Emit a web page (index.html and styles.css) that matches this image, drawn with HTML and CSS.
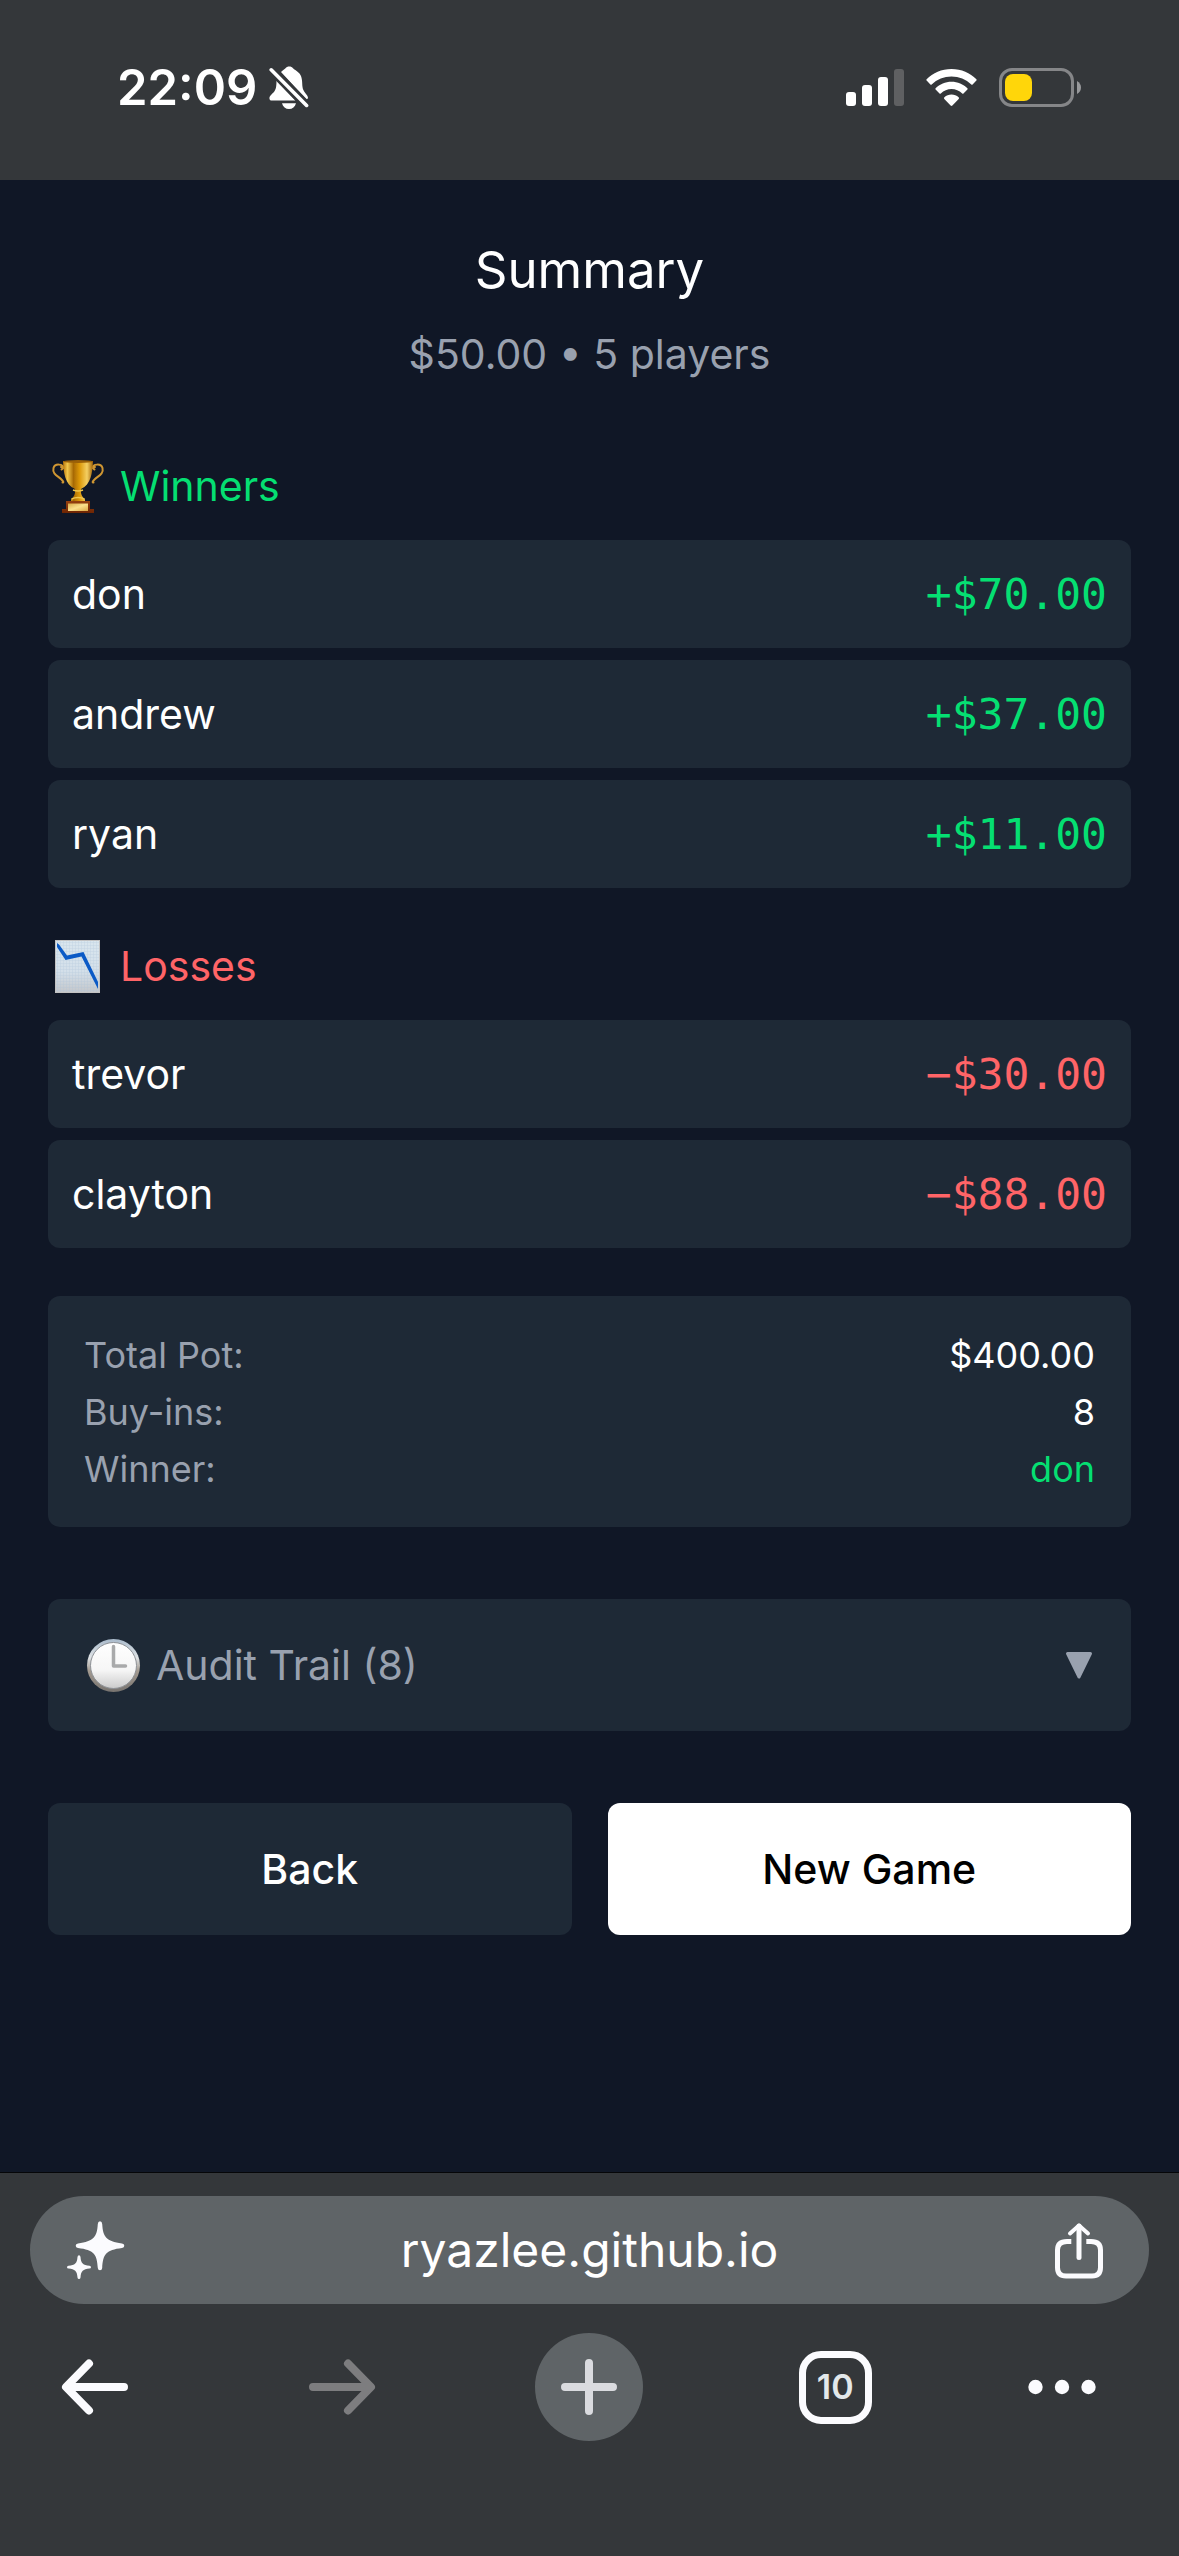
FILE: index.html
```html
<!DOCTYPE html>
<html lang="en">
<head>
<meta charset="utf-8">
<meta name="viewport" content="width=device-width, initial-scale=1">
<title>Summary</title>
<link rel="stylesheet" href="styles.css">
</head>
<body>
<div class="screen">
  <header class="status-bar">
    <div class="status-group status-left">
      <time class="clock">22:09</time>
      <svg class="icon-bell" viewBox="0 0 40 44" fill="#fff" role="img" aria-label="Silent mode">
        <path d="M12 6C14 4 15.500 3.400 16.500 2.200C18 0 22.500 0 24 2.200C25 3.500 28 4.500 30.500 7.500C33.500 11.500 33 16 33.500 21C34 26 38.500 28.500 39 31.500Q39 33 37.500 33.500Z"/>
        <path d="M7.500 14.500L26.500 34.500H3C-.500 34.500 0 30.500 2 29C6 25 7.500 24 7.500 14.500Z"/>
        <path d="M13 37.200H27C26 41 23.500 43 20 43S14 41 13 37.200Z"/>
        <path d="M2.200 3.400L38 40" fill="none" stroke="#34373a" stroke-width="9"/>
        <path d="M2.200 3.800L37.600 39.400" fill="none" stroke="#fff" stroke-width="3.600" stroke-linecap="round"/>
      </svg>
    </div>
    <div class="status-group status-right">
      <svg class="icon-signal" viewBox="0 0 58 38" fill="#fff" role="img" aria-label="Signal">
        <rect x="0" y="23" width="10" height="14" rx="3"/>
        <rect x="16" y="16" width="10" height="21" rx="3"/>
        <rect x="32" y="8" width="10" height="29" rx="3"/>
        <rect x="48" y="0" width="10" height="37" rx="3" fill="#5f6062"/>
      </svg>
      <svg class="icon-wifi" viewBox="0 0 51 38" fill="#fff" role="img" aria-label="Wi-Fi">
        <path d="M.6 10.300C7 3.700 15.500 0 25.500 0S44 3.700 50.400 10.300Q51 11 50.400 11.600L46.600 15.400Q46 16 45.300 15.400C40 10.300 33 7.400 25.500 7.400S11 10.300 5.700 15.400Q5 16 4.400 15.400L.6 11.600Q0 11 .6 10.300Z"/>
        <path d="M9.600 19.200C13.800 15.100 19.300 12.700 25.500 12.700S37.200 15.100 41.400 19.200Q42 20 41.400 20.600L37.500 24.500Q36.800 25 36.200 24.500C33.300 21.700 29.500 20.100 25.500 20.100S17.700 21.700 14.800 24.500Q14.200 25 13.500 24.500L9.600 20.600Q9 20 9.600 19.200Z"/>
        <path d="M18.400 28.200C20.300 26.500 22.800 25.500 25.500 25.500S30.700 26.500 32.600 28.200Q33.500 29 32.700 29.900L26.400 36.500Q25.500 37.300 24.600 36.500L18.300 29.900Q17.500 29 18.400 28.200Z"/>
      </svg>
      <svg class="icon-battery" viewBox="0 0 82 40" role="img" aria-label="Battery">
        <rect x="1.500" y="1.500" width="72" height="36" rx="11.500" fill="none" stroke="#858688" stroke-width="3"/>
        <rect x="6" y="6" width="27" height="27" rx="8" fill="#ffd60a"/>
        <path d="M78 13Q82 15.500 82 19.500T78 26Z" fill="#98999b"/>
      </svg>
    </div>
  </header>

  <main class="page">
    <div class="intro">
      <h1 class="title">Summary</h1>
      <p class="subtitle">$50.00 • 5 players</p>
    </div>

    <section class="group">
      <h2 class="group-title gain">
        <svg class="emoji" viewBox="0 0 60 60" aria-hidden="true">
          <defs>
            <linearGradient id="gold" x1="0" x2="1" y1="0" y2="0">
              <stop offset="0" stop-color="#b87408"/><stop offset=".15" stop-color="#f2c64a"/>
              <stop offset=".35" stop-color="#a86a04"/><stop offset=".55" stop-color="#dc9808"/>
              <stop offset=".8" stop-color="#f4cf62"/><stop offset="1" stop-color="#a06206"/>
            </linearGradient>
            <linearGradient id="wood" x1="0" x2="0" y1="0" y2="1">
              <stop offset="0" stop-color="#95400f"/><stop offset="1" stop-color="#6e2503"/>
            </linearGradient>
            <linearGradient id="plate" x1="0" x2="1" y1="0" y2="1">
              <stop offset="0" stop-color="#d8ab4a"/><stop offset=".5" stop-color="#fbe08c"/><stop offset="1" stop-color="#dba846"/>
            </linearGradient>
          </defs>
          <g fill="none" stroke="#cf9632" stroke-width="2" stroke-linecap="round">
            <path d="M16 12C15 8 7 7 5.500 12C4 18 10 20 13 23C15.500 25.500 16 26.500 14.500 26.500M13 11C15 11 15 13 13.500 13.500"/>
            <path d="M44 12C45 8 53 7 54.500 12C56 18 50 20 47 23C44.500 25.500 44 26.500 45.500 26.500M47 11C45 11 45 13 46.500 13.500"/>
          </g>
          <path d="M15 5H45C44.500 16 43 29 33 33C32.500 36 33 40 37 43.500V46H23V43.500C27 40 27.500 36 27 33C17 29 15.500 16 15 5Z" fill="url(#gold)"/>
          <ellipse cx="30" cy="5.500" rx="15" ry="1.500" fill="#9a6008"/>
          <path d="M25 34Q30 36 35 34M23.500 43Q30 40 36.500 43" fill="none" stroke="#f0c64e" stroke-width="1.500"/>
          <path d="M18 45H42V53H46V57H14V53H18Z" fill="url(#wood)"/>
          <rect x="20" y="47.500" width="20" height="7.500" fill="url(#plate)"/>
        </svg>
        Winners
      </h2>
      <ul class="rows">
        <li class="row"><span>don</span><span class="amount gain">+$70.00</span></li>
        <li class="row"><span>andrew</span><span class="amount gain">+$37.00</span></li>
        <li class="row"><span>ryan</span><span class="amount gain">+$11.00</span></li>
      </ul>
    </section>

    <section class="group">
      <h2 class="group-title loss">
        <svg class="emoji" viewBox="0 0 60 60" aria-hidden="true">
          <defs>
            <linearGradient id="paper" x1="0" x2="0" y1="0" y2="1">
              <stop offset="0" stop-color="#d9e6ee"/><stop offset=".6" stop-color="#d3dfe9"/><stop offset="1" stop-color="#c3c6ca"/>
            </linearGradient>
            <pattern id="grid" width="3" height="3" patternUnits="userSpaceOnUse">
              <path d="M0 0H3M0 0V3" stroke="#a9c2d8" stroke-width=".8"/>
            </pattern>
          </defs>
          <rect x="7" y="4" width="45" height="53" fill="url(#paper)"/>
          <rect x="7" y="4" width="45" height="53" fill="url(#grid)" opacity=".55"/>
          <rect x="7.500" y="4.500" width="44" height="52" fill="none" stroke="#c2c2c2"/>
          <path d="M9 7V11L17.500 24L33.500 20.500L50 53V46L35.500 16L19 19.500L11 8.500Z" fill="#0b5ac6"/>
        </svg>
        Losses
      </h2>
      <ul class="rows">
        <li class="row"><span>trevor</span><span class="amount loss">−$30.00</span></li>
        <li class="row"><span>clayton</span><span class="amount loss">−$88.00</span></li>
      </ul>
    </section>

    <dl class="totals">
      <div class="total"><dt>Total Pot:</dt><dd>$400.00</dd></div>
      <div class="total"><dt>Buy-ins:</dt><dd>8</dd></div>
      <div class="total"><dt>Winner:</dt><dd class="gain">don</dd></div>
    </dl>

    <button class="audit" type="button" aria-expanded="false">
      <span class="audit-label">
        <svg class="emoji" viewBox="0 0 60 60" aria-hidden="true">
          <defs>
            <linearGradient id="rim" x1="0" x2="0" y1="0" y2="1">
              <stop offset="0" stop-color="#a9bacb"/><stop offset=".35" stop-color="#dfe3e6"/>
              <stop offset=".6" stop-color="#a39a90"/><stop offset="1" stop-color="#77736f"/>
            </linearGradient>
            <linearGradient id="face" x1="0" x2="0" y1="0" y2="1">
              <stop offset="0" stop-color="#fff"/><stop offset=".6" stop-color="#f6f6f6"/><stop offset="1" stop-color="#cbcbcb"/>
            </linearGradient>
          </defs>
          <circle cx="29.500" cy="30.500" r="26.500" fill="url(#rim)"/>
          <circle cx="29.500" cy="30.500" r="23" fill="url(#face)" stroke="#8d9196" stroke-width="1"/>
          <path d="M29.500 11.500V31H41.500" fill="none" stroke="#a9aaab" stroke-width="3.500" stroke-linecap="round" stroke-linejoin="round"/>
        </svg>
        Audit Trail (8)
      </span>
      <svg class="caret" viewBox="0 0 32 32" aria-hidden="true">
        <path d="M4.500 4.500H27.500L16 28Z" fill="#99a1af" stroke="#99a1af" stroke-width="3" stroke-linejoin="round"/>
      </svg>
    </button>

    <div class="actions">
      <button class="action action-dark" type="button">Back</button>
      <button class="action action-light" type="button">New Game</button>
    </div>
  </main>

  <footer class="browser-bar">
    <div class="omnibox">
      <button class="icon-button" type="button" aria-label="Assistant">
        <svg class="icon-60" viewBox="0 0 60 60" fill="#fbfbfe">
          <path d="M34 1.300Q36 1.300 36.200 4C37 17 40 21 56 23.500Q58.300 24 58.300 25.800T56 28C40 30 37 34 36.200 48Q36 50.200 34 50.200T31.800 48C31 34 28 30 12 28Q9.700 27.600 9.700 25.800T12 23.500C28 21 31 17 31.800 4Q32 1.300 34 1.300Z"/>
          <path d="M13 35.200Q14.300 35.200 14.500 37C15 43.500 17 45.200 23.500 45.800Q25 46 25 47.200T23.500 48.600C17 49.300 15 51 14.500 57.500Q14.300 59 13 59T11.500 57.500C11 51 9 49.300 2.500 48.600Q1 48.400 1 47.200T2.500 45.800C9 45.200 11 43.500 11.500 37Q11.700 35.200 13 35.200Z"/>
        </svg>
      </button>
      <input class="address" type="text" aria-label="Address" value="ryazlee.github.io">
      <button class="icon-button" type="button" aria-label="Share">
        <svg class="icon-60" viewBox="0 0 60 60" fill="none" stroke="#fbfbfe" stroke-width="5">
          <path d="M18.300 21.500H14Q4.500 21.500 4.500 30V47.500Q4.500 56 13 56H39Q47.500 56 47.500 47.500V30Q47.500 21.500 38 21.500H33.300"/>
          <path d="M26 37.500V6" stroke-linecap="round"/>
          <path d="M17 13.500L26 5.500L35 13.500" stroke-width="4" stroke-linecap="round" stroke-linejoin="round"/>
        </svg>
      </button>
    </div>
    <nav class="toolbar" aria-label="Browser">
      <button class="icon-button tool" type="button" aria-label="Back">
        <svg class="icon-68" viewBox="0 0 68 68" fill="none" stroke="#fbfbfe" stroke-width="8" stroke-linecap="round" stroke-linejoin="round"><path d="M63 34H6M28 10.500L5 34L28 57.500"/></svg>
      </button>
      <button class="icon-button tool" type="button" aria-label="Forward" disabled>
        <svg class="icon-68" viewBox="0 0 68 68" fill="none" stroke="#7d7d7f" stroke-width="8" stroke-linecap="round" stroke-linejoin="round"><path d="M5 34H62M40 10.500L63 34L40 57.500"/></svg>
      </button>
      <button class="icon-button tool" type="button" aria-label="New tab">
        <span class="plus">
          <svg class="icon-56" viewBox="0 0 56 56" fill="none" stroke="#dadbdf" stroke-width="8" stroke-linecap="round"><path d="M4 28H52M28 4V52"/></svg>
        </span>
      </button>
      <button class="icon-button tool" type="button" aria-label="Tabs">
        <span class="tab-count">10</span>
      </button>
      <button class="icon-button tool tool-narrow" type="button" aria-label="More">
        <svg class="icon-68" viewBox="0 0 68 68" fill="#fbfbfe"><circle cx="7.500" cy="34" r="7.200"/><circle cx="34" cy="34" r="7.200"/><circle cx="60.500" cy="34" r="7.200"/></svg>
      </button>
    </nav>
  </footer>
</div>
</body>
</html>
```

FILE: styles.css
```css
*,
*::before,
*::after {
  box-sizing: border-box;
}

body {
  margin: 0;
  background: #101726;
  color: #fff;
  font-family: Inter, "Liberation Sans", sans-serif;
  font-size: 41px;
  line-height: 60px;
}

h1,
h2,
p,
ul,
dl,
dd {
  margin: 0;
  padding: 0;
  font-weight: 400;
}

button,
input {
  margin: 0;
  padding: 0;
  border: 0;
  background: none;
  color: inherit;
  font: inherit;
}

svg {
  display: block;
  flex: none;
}

.gain {
  color: #05df72;
}

.loss {
  color: #ff6467;
}

.screen {
  display: flex;
  flex-direction: column;
  min-height: 100vh;
}

/* Status bar */

.status-bar {
  display: flex;
  justify-content: space-between;
  align-items: flex-start;
  min-height: 180px;
  padding: 56px 98px 0 117px;
  background: #34373a;
}

.status-group {
  display: flex;
  align-items: center;
  height: 64px;
}

.status-left {
  gap: 12px;
}

.status-right {
  gap: 22px;
}

.clock {
  font-size: 49px;
  font-weight: 600;
}

.icon-bell {
  width: 40px;
  height: 44px;
}

.icon-signal {
  width: 58px;
  height: 38px;
}

.icon-wifi {
  width: 51px;
  height: 38px;
}

.icon-battery {
  width: 82px;
  height: 40px;
}

/* Page */

.page {
  flex: 1;
  padding: 48px;
}

.intro {
  margin-bottom: 72px;
  text-align: center;
}

.title {
  margin-bottom: 12px;
  font-size: 51px;
  line-height: 84px;
}

.subtitle {
  color: #99a1af;
}

.group {
  margin-bottom: 48px;
}

.group-title {
  display: flex;
  align-items: center;
  gap: 12px;
  margin-bottom: 24px;
  font-size: 41px;
}

.emoji {
  width: 60px;
  height: 60px;
}

.rows {
  display: grid;
  gap: 12px;
  list-style: none;
}

.row {
  display: flex;
  justify-content: space-between;
  align-items: center;
  padding: 24px;
  border-radius: 12px;
  background: #1e2936;
}

.amount {
  font-family: "DejaVu Sans Mono", "Liberation Mono", monospace;
  font-size: 43px;
}

.totals {
  display: grid;
  gap: 12px;
  margin-bottom: 72px;
  padding: 37px 36px 35px;
  border-radius: 12px;
  background: #1e2936;
  font-size: 36px;
  line-height: 45px;
}

.total {
  display: flex;
  justify-content: space-between;
}

.total dt {
  color: #99a1af;
}

.audit {
  display: flex;
  justify-content: space-between;
  align-items: center;
  width: 100%;
  margin-bottom: 72px;
  padding: 36px;
  border-radius: 12px;
  background: #1e2936;
  color: #99a1af;
}

.audit-label {
  display: flex;
  align-items: center;
  gap: 12px;
}

.caret {
  width: 32px;
  height: 32px;
}

.actions {
  display: grid;
  grid-template-columns: 1fr 1fr;
  gap: 36px;
}

.action {
  padding: 36px;
  border-radius: 12px;
  font-weight: 500;
}

.action-dark {
  background: #1e2936;
}

.action-light {
  background: #fff;
  color: #000;
}

/* Browser controls */

.browser-bar {
  min-height: 384px;
  padding-top: 23px;
  border-top: 1px solid #050608;
  background: #34373a;
}

.omnibox {
  display: flex;
  align-items: center;
  height: 108px;
  margin: 0 30px 29px;
  padding: 0 36px;
  border-radius: 54px;
  background: #5f6467;
}

.address {
  flex: 1;
  min-width: 0;
  font-size: 48px;
  text-align: center;
}

.icon-button {
  display: flex;
  justify-content: center;
  align-items: center;
}

.icon-60 {
  width: 60px;
  height: 60px;
}

.icon-68 {
  width: 68px;
  height: 68px;
}

.icon-56 {
  width: 56px;
  height: 56px;
}

.toolbar {
  display: flex;
  justify-content: space-between;
  padding: 0 71px 0 29px;
}

.tool {
  width: 132px;
  height: 108px;
}

.tool-narrow {
  width: 92px;
}

.plus {
  display: flex;
  justify-content: center;
  align-items: center;
  width: 108px;
  height: 108px;
  border-radius: 50%;
  background: #5f6467;
}

.tab-count {
  display: flex;
  justify-content: center;
  align-items: center;
  width: 73px;
  height: 73px;
  border: 7px solid #fbfbfe;
  border-radius: 22px;
  color: #e3e8ea;
  font-size: 34px;
  font-weight: 600;
}
```
